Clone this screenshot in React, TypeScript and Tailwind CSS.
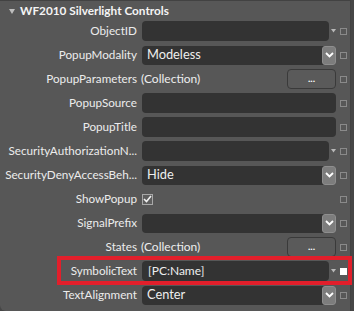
import React, { useLayoutEffect, useRef, useState } from "react";

type Kind = "input" | "inputArrow" | "dropdown" | "button" | "check" | "empty";

interface Row {
  label: string;
  kind: Kind;
  value?: string;
  lead?: string;
  filled?: boolean;
}

const rows: Row[] = [
  { label: "ObjectID", kind: "inputArrow" },
  { label: "PopupModality", kind: "dropdown", value: "Modeless" },
  { label: "PopupParameters", kind: "button", lead: "(Collection)" },
  { label: "PopupSource", kind: "input" },
  { label: "PopupTitle", kind: "input" },
  { label: "SecurityAuthorizationN...", kind: "inputArrow" },
  { label: "SecurityDenyAccessBeh...", kind: "dropdown", value: "Hide" },
  { label: "ShowPopup", kind: "check" },
  { label: "SignalPrefix", kind: "dropdown" },
  { label: "States", kind: "button", lead: "(Collection)" },
  { label: "SymbolicText", kind: "inputArrow", value: "[PC:Name]", filled: true },
  { label: "TextAlignment", kind: "dropdown", value: "Center" },
];

function Chevron() {
  return (
    <svg width="9" height="6" viewBox="0 0 9 6">
      <path d="M1 1 L4.5 4.5 L8 1" stroke="#ffffff" strokeWidth="1.8" fill="none" />
    </svg>
  );
}

function SmallArrow() {
  return (
    <svg width="5" height="4" viewBox="0 0 5 4">
      <path d="M0 0 L5 0 L2.5 3.5 Z" fill="#b8b8b8" />
    </svg>
  );
}

function Value({ row }: { row: Row }) {
  switch (row.kind) {
    case "input":
      return <div className="w-[194px] h-[20px] rounded-[4px] bg-[#333333]" />;
    case "inputArrow":
      return (
        <div className="flex items-center w-[194px]">
          <div className="w-[189px] h-[20px] rounded-[4px] bg-[#333333] flex items-center pl-[6px] text-[12px] text-[#eeeeee]">
            {row.value}
          </div>
          <div className="ml-[2px] flex items-center">
            <SmallArrow />
          </div>
        </div>
      );
    case "dropdown":
      return (
        <div className="w-[194px] h-[19px] rounded-[4px] bg-[#333333] flex items-center justify-between pl-[5px]">
          <span className="text-[12.8px] text-[#eeeeee]">{row.value}</span>
          <div className="w-[14px] h-[19px] rounded-[3px] bg-[#7d7d7d] border border-[#8e8e8e] flex items-center justify-center">
            <Chevron />
          </div>
        </div>
      );
    case "button":
      return (
        <div className="w-[194px] h-[20px] flex items-center justify-between">
          <span className="text-[12px] text-[#eeeeee] -ml-[1px]">{row.lead}</span>
          <div className="w-[49px] h-[20px] rounded-[4px] border border-[#3a3a3a] bg-[#5a5a5a] flex items-center justify-center">
            <span className="text-[10px] leading-none text-white font-bold -mt-[3px]">...</span>
          </div>
        </div>
      );
    case "check":
      return (
        <div className="w-[194px] h-[20px] flex items-center">
          <div className="w-[11px] h-[11px] border border-[#a8a8a8] bg-[#5e5e5e] flex items-center justify-center">
            <svg width="9" height="8" viewBox="0 0 9 8">
              <path d="M1 4 L3.5 6.5 L8 1" stroke="#f2f2f2" strokeWidth="1.6" fill="none" />
            </svg>
          </div>
        </div>
      );
    default:
      return <div className="w-[194px]" />;
  }
}

function Header() {
  const ref = useRef<HTMLSpanElement>(null);
  const [size, setSize] = useState<number | undefined>(undefined);
  useLayoutEffect(() => {
    if (ref.current && size === undefined) {
      const w = ref.current.getBoundingClientRect().width;
      if (w > 0) setSize((13 * 149) / w);
    }
  }, [size]);
  return (
    <div className="h-[18px] flex items-center pl-[9px] pt-[2px]">
      <svg width="6" height="5" viewBox="0 0 6 5">
        <path d="M0 0 L6 0 L3 5 Z" fill="#bdbdbd" />
      </svg>
      <span
        ref={ref}
        className="ml-[5px] text-[13px] font-bold text-[#f4f4f4] leading-none whitespace-nowrap"
        style={size ? { fontSize: size } : undefined}
      >
        WF2010 Silverlight Controls
      </span>
    </div>
  );
}

export default function App() {
  return (
    <div className="w-[354px] h-[311px] bg-[#464646] overflow-hidden font-['Lato','Noto_Sans',sans-serif]">
      <div className="w-[351px] h-[311px] bg-[#575757] border-r border-t border-[#424242] rounded-bl-[6px] flex flex-col">
        <Header />
        {rows.map((row, i) => (
          <div key={i} className="relative h-[24px] flex items-center">
            <div className="w-[137px] text-right text-[11.7px] text-[#ececec] whitespace-nowrap">
              {row.label}
            </div>
            <div className="ml-[5px]">
              <Value row={row} />
            </div>
            <div
              className={
                row.filled
                  ? "ml-[4px] w-[7px] h-[7px] bg-white"
                  : "ml-[4px] w-[7px] h-[7px] border border-[#8a8a8a]"
              }
            />
            {row.label === "SymbolicText" && (
              <div className="absolute left-[57px] top-[-3px] w-[295px] h-[29px] border-[4px] border-[#e21f2b] pointer-events-none" />
            )}
          </div>
        ))}
      </div>
    </div>
  );
}
